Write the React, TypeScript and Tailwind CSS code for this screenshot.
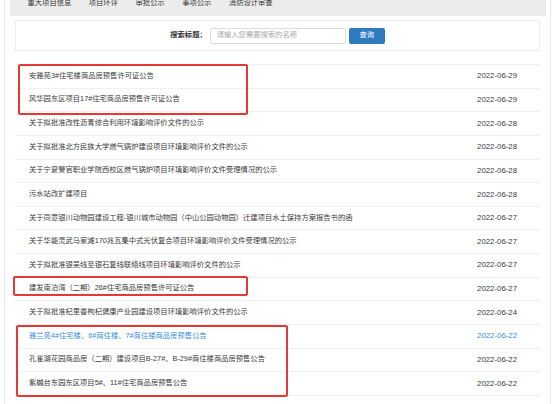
import React from 'react';

const tabs = ['重大项目信息', '项目环评', '审批公示', '事项公示', '消防设计审查'];

const rows: { title: string; date: string; active?: boolean }[] = [
  { title: '安雅苑3#住宅楼商品房预售许可证公告', date: '2022-06-29' },
  { title: '风华园东区项目17#住宅商品房预售许可证公告', date: '2022-06-29' },
  { title: '关于拟批准改性沥青综合利用环境影响评价文件的公示', date: '2022-06-28' },
  { title: '关于拟批准北方民族大学燃气锅炉建设项目环境影响评价文件的公示', date: '2022-06-28' },
  { title: '关于宁夏警官职业学院西校区燃气锅炉项目环境影响评价文件受理情况的公示', date: '2022-06-28' },
  { title: '污水站改扩建项目', date: '2022-06-28' },
  { title: '关于同意银川动物园建设工程-银川城市动物园（中山公园动物园）迁建项目水土保持方案报告书的函', date: '2022-06-27' },
  { title: '关于华能灵武马家滩170兆瓦集中式光伏复合项目环境影响评价文件受理情况的公示', date: '2022-06-27' },
  { title: '关于拟批准银吴线至银石复线联络线项目环境影响评价文件的公示', date: '2022-06-27' },
  { title: '建发南泊湾（二期）26#住宅商品房预售许可证公告', date: '2022-06-27' },
  { title: '关于拟批准杞里香枸杞健康产业园建设项目环境影响评价文件的公示', date: '2022-06-24' },
  { title: '雅兰苑4#住宅楼、6#商住楼、7#商住楼商品房预售公告', date: '2022-06-22', active: true },
  { title: '孔雀湖花园商品房（二期）建设项目B-27#、B-29#商住楼商品房预售公告', date: '2022-06-22' },
  { title: '紫樾台东园东区项目5#、11#住宅商品房预售公告', date: '2022-06-22' },
];

export default function App() {
  return (
    <div className="relative w-[553px] h-[404px] overflow-hidden bg-white font-['Liberation_Sans','Noto_Sans_CJK_SC',sans-serif] text-[7.3px] text-[#3a3a3a]">
      <div className="ml-[4px] w-[547px] h-[404px] border-x border-[#e8e8e8]">
        {/* top tabs, scrolled so the labels are partly cut off */}
        <div className="ml-[5px] mr-[4px] h-[16px] bg-[#ececec] overflow-hidden">
          <div className="flex gap-[17.5px] pl-[17.5px] -mt-[2px] leading-[10px] text-[#333]">
            {tabs.map((t) => (
              <span key={t}>{t}</span>
            ))}
          </div>
        </div>

        {/* search */}
        <div className="mx-[10px] mt-[4px] h-[31px] border border-[#eeeeee] flex items-center justify-center">
          <span className="font-bold text-[#333] mr-[3px]">搜索标题：</span>
          <div className="w-[136px] h-[16px] border border-[#dddddd] rounded-[2px] flex items-center pl-[6px] text-[#aaa]">
            请输入您需要搜索的名称
          </div>
          <button className="ml-[3px] w-[36px] h-[16px] bg-[#2f7bbf] rounded-[2px] text-white text-[7.3px] flex items-center justify-center">
            查询
          </button>
        </div>

        {/* list */}
        <div className="mx-[10px] mt-[13px] border-t border-[#f0f0f0]">
          {rows.map((r) => (
            <div
              key={r.title}
              className={`h-[23.64px] border-b border-[#f0f0f0] flex items-center justify-between pl-[14px] pr-[23px] ${
                r.active ? 'text-[#3a8fd9]' : ''
              }`}
            >
              <span className="whitespace-nowrap">{r.title}</span>
              <span className="whitespace-nowrap text-[7.8px]">{r.date}</span>
            </div>
          ))}
        </div>
      </div>

      {/* annotation boxes */}
      <div className="absolute left-[18px] top-[64px] w-[230px] h-[51px] border-2 border-[#e53935] rounded-[2px]" />
      <div className="absolute left-[13px] top-[276px] w-[235px] h-[20px] border-2 border-[#e53935] rounded-[2px]" />
      <div className="absolute left-[16px] top-[325px] w-[272px] h-[72px] border-2 border-[#e53935] rounded-[2px]" />
    </div>
  );
}
